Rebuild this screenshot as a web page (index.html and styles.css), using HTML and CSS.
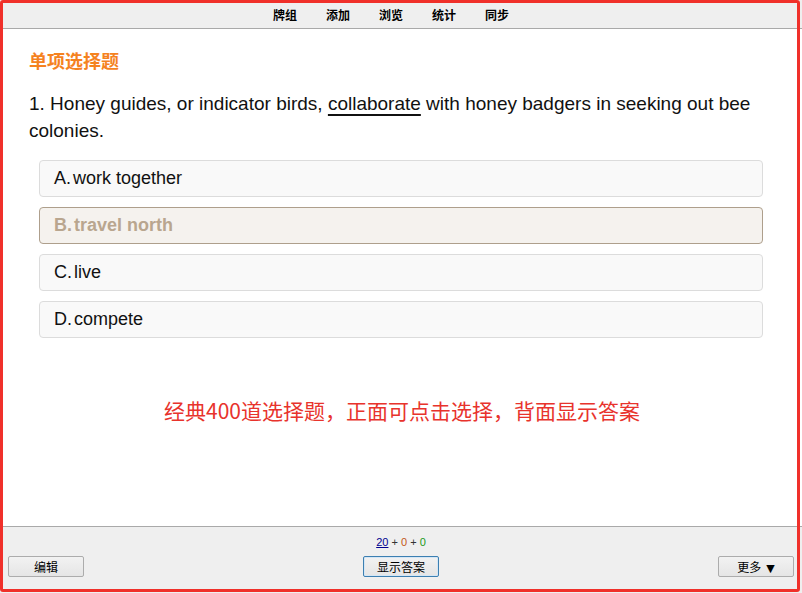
FILE: index.html
```html
<!DOCTYPE html>
<html lang="zh">
<head>
<meta charset="utf-8">
<title>单项选择题</title>
<link rel="stylesheet" href="styles.css">
</head>
<body>
<div class="app">
  <nav class="toolbar">
    <a class="tb-item">牌组</a>
    <a class="tb-item">添加</a>
    <a class="tb-item">浏览</a>
    <a class="tb-item">统计</a>
    <a class="tb-item">同步</a>
  </nav>
  <main class="card">
    <h1 class="qtype">单项选择题</h1>
    <p class="question">1. Honey guides, or indicator birds, <span class="key">collaborate</span> with honey badgers in seeking out bee colonies.</p>
    <ul class="options">
      <li class="option"><span class="opt-letter">A.</span>work together</li>
      <li class="option selected"><span class="opt-letter">B.</span>travel north</li>
      <li class="option"><span class="opt-letter">C.</span>live</li>
      <li class="option"><span class="opt-letter">D.</span>compete</li>
    </ul>
    <p class="note">经典400道选择题，正面可点击选择，背面显示答案</p>
  </main>
  <footer class="bottombar">
    <div class="counts"><a class="c-new">20</a> + <span class="c-learn">0</span> + <span class="c-review">0</span></div>
    <div class="buttons">
      <button class="btn">编辑</button>
      <button class="btn primary">显示答案</button>
      <button class="btn">更多<span class="caret">▼</span></button>
    </div>
  </footer>
</div>
<div class="frame"></div>
</body>
</html>
```
FILE: styles.css
```css
html, body {
  margin: 0;
  padding: 0;
  height: 100%;
  background: #ffffff;
}
body {
  position: relative;
  overflow: hidden;
}
.app {
  display: flex;
  flex-direction: column;
  height: 593px;
}
.toolbar {
  height: 28px;
  flex: none;
  background: #efefef;
  border-bottom: 1px solid #a9a9a9;
  display: flex;
  justify-content: center;
  align-items: center;
  gap: 29px;
  padding-right: 20px;
  font-family: "Noto Sans CJK SC", sans-serif;
  font-size: 12px;
  font-weight: bold;
  color: #000;
}
.tb-item {
  line-height: 14px;
  padding-top: 1px;
}
.card {
  flex: 1;
  padding: 0 39px 0 29px;
  font-family: "Liberation Sans", Arial, sans-serif;
  color: #111;
}
.qtype {
  margin: 19px 0 0;
  font-family: "Noto Sans CJK SC", sans-serif;
  font-size: 18px;
  line-height: 24px;
  font-weight: bold;
  color: #f5821f;
}
.question {
  margin: 18px 0 0;
  font-size: 19px;
  line-height: 27px;
  margin-right: -10px;
}
.key {
  text-decoration: underline;
  text-decoration-thickness: 2px;
  text-underline-offset: 4px;
}
.options {
  list-style: none;
  margin: 16px 0 0 10px;
  padding: 0;
  display: flex;
  flex-direction: column;
  gap: 10px;
}
.option {
  height: 35px;
  line-height: 35px;
  padding-left: 14px;
  border: 1px solid #dcdcdc;
  border-radius: 4px;
  background: #f9f9f9;
  font-size: 18px;
  color: #111;
}
.opt-letter {
  margin-right: 2px;
}
.option.selected {
  background: #f5f2ee;
  border-color: #ae9f8c;
  color: #b9a68f;
  font-weight: bold;
}
.note {
  margin: 57px 0 0;
  text-align: center;
  padding-left: 12px;
  font-family: "Noto Sans CJK SC", sans-serif;
  font-size: 21px;
  line-height: 30px;
  color: #e8332c;
}
.bottombar {
  flex: none;
  height: 66px;
  background: #efefef;
  border-top: 1px solid #a9a9a9;
  font-family: "Noto Sans CJK SC", sans-serif;
  display: flex;
  flex-direction: column;
}
.counts {
  margin-top: 8px;
  text-align: center;
  font-family: "Liberation Sans", Arial, sans-serif;
  font-size: 11px;
  line-height: 14px;
  color: #333;
}
.c-new {
  color: #000090;
  text-decoration: underline;
}
.c-learn { color: #c35617; }
.c-review { color: #1a9a1a; }
.buttons {
  margin-top: 7px;
  display: flex;
  justify-content: space-between;
  padding: 0 8px;
}
.btn {
  width: 76px;
  height: 21px;
  padding: 0;
  border: 1px solid #acacac;
  border-radius: 2px;
  background: linear-gradient(#f2f2f2, #e5e5e5);
  font-family: "Noto Sans CJK SC", sans-serif;
  font-size: 12px;
  line-height: 19px;
  color: #000;
}
.caret {
  margin-left: 5px;
  font-family: "DejaVu Sans", sans-serif;
  font-size: 11px;
}
.btn.primary {
  border-color: #3c7fb1;
  box-shadow: inset 0 0 0 1px #d4e6f5;
}
.frame {
  position: absolute;
  left: 0;
  top: 0;
  width: 794px;
  height: 586px;
  border: 3px solid #f0302a;
  border-radius: 3px;
  pointer-events: none;
}
```
